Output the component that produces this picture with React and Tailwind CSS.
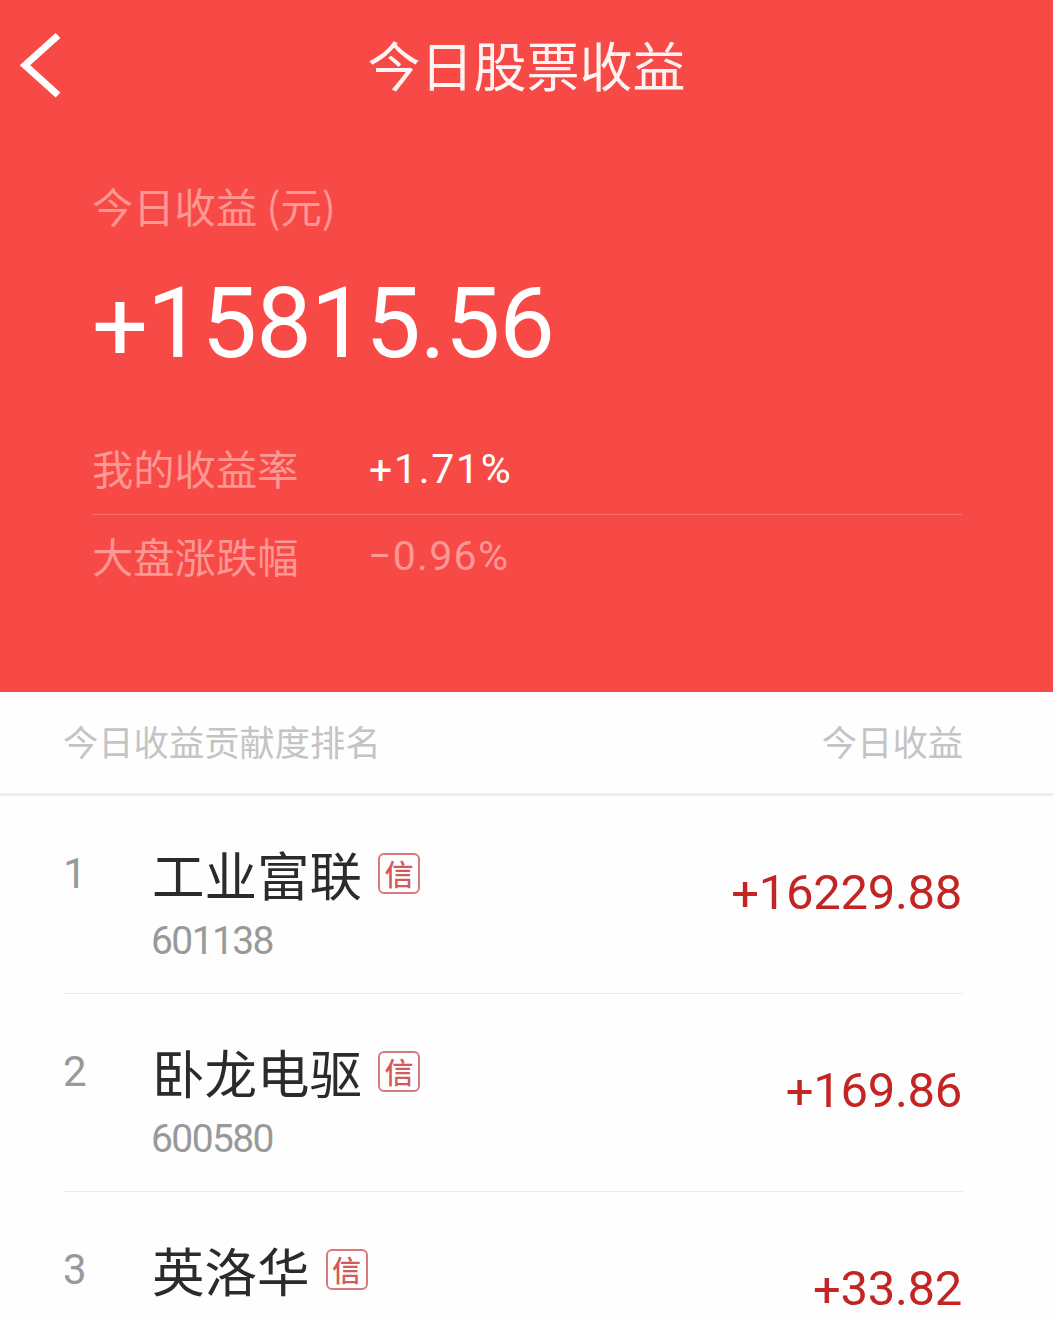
import React from 'react';

const stocks = [
  { rank: 1, name: '工业富联', code: '601138', profit: '16229.88' },
  { rank: 2, name: '卧龙电驱', code: '600580', profit: '169.86' },
  { rank: 3, name: '英洛华', profit: '33.82' },
];

const BackIcon = () => (
  <svg width="42" height="68" viewBox="0 0 42 68" fill="none" className="block">
    <path d="M38 3.5 L5 33.2 L38 63" stroke="white" strokeWidth="7" />
  </svg>
);

const CreditBadge = () => (
  <span className="mt-px flex h-[41px] w-[42px] items-center justify-center rounded-[6px] border-2 border-[#d97a7a] text-[29px] leading-none font-medium text-[#d25a5a]">
    信
  </span>
);

// the sign sits a little lower than Roboto's own plus
const Plus = () => <span className="relative top-[0.03em]">+</span>;

const StockRow = ({ stock }) => (
  <li className="mr-[90px] ml-[63px] flex h-[198px] border-b border-[#e9e9e9] last:border-b-0">
    <div className="mt-[57px] w-[89px] font-['Roboto'] text-[42px] leading-[42px] text-[#999]">
      {stock.rank}
    </div>
    <div className="mt-[47px] flex-1">
      <div className="flex h-[60px] items-center gap-[16px] text-[52.5px] leading-[60px] text-[#2b2b2b]">
        <span>{stock.name}</span>
        <CreditBadge />
      </div>
      {stock.code && (
        <div className="mt-[18px] -ml-px font-['Roboto'] text-[39px] leading-[40px] tracking-[-1.6px] text-[#999]">
          {stock.code}
        </div>
      )}
    </div>
    <div className="mt-[73px] pr-px font-['Roboto'] text-[49px] leading-[48px] tracking-[-0.3px] text-[#c32525]">
      <Plus />
      {stock.profit}
    </div>
  </li>
);

const App = () => {
  return (
    <div className="h-[1322px] w-[1053px] overflow-hidden bg-[#fefefe] font-['Noto_Sans_CJK_SC',sans-serif]">
      <div className="h-[692px] bg-[#f74a46]">
        <header className="grid h-[132px] grid-cols-[1fr_auto_1fr] items-center">
          <button className="w-fit pl-[20px]">
            <BackIcon />
          </button>
          <h1 className="pb-[4px] text-[53px] leading-[60px] text-[#fff4f3]">今日股票收益</h1>
        </header>

        <section className="pr-[91px] pl-[92px]">
          <div className="mt-[48px] text-[41.3px] leading-[50px] text-[#fd9794]">今日收益 (元)</div>
          <div className="mt-[43px] font-['Roboto'] text-[99px] leading-[100px] tracking-[-1.1px] text-white">
            <Plus />
            15815.56
          </div>

          <div className="mt-[52px] flex h-[90px] items-center border-b border-[#fa6e6b] text-[41.3px]">
            <span className="w-[277px] pb-[3px] text-[#fd9794]">我的收益率</span>
            <span className="font-['Roboto'] text-[41px] tracking-[1.7px] text-white">
              <Plus />
              1.71%
            </span>
          </div>
          <div className="flex h-[84px] items-center text-[41.3px] text-[#fd9794]">
            <span className="w-[276px] pb-[3px]">大盘涨跌幅</span>
            <span className="font-['Roboto'] text-[41px] tracking-[1.3px]">−0.96%</span>
          </div>
        </section>
      </div>

      <div className="flex h-[104px] items-center justify-between border-b-[3px] border-[#ededed] pr-[90px] pb-[3px] pl-[63px] text-[35.3px] text-[#c4c4c4]">
        <span>今日收益贡献度排名</span>
        <span>今日收益</span>
      </div>

      <ul>
        {stocks.map((stock) => (
          <StockRow key={stock.rank} stock={stock} />
        ))}
      </ul>
    </div>
  );
};

export default App;
